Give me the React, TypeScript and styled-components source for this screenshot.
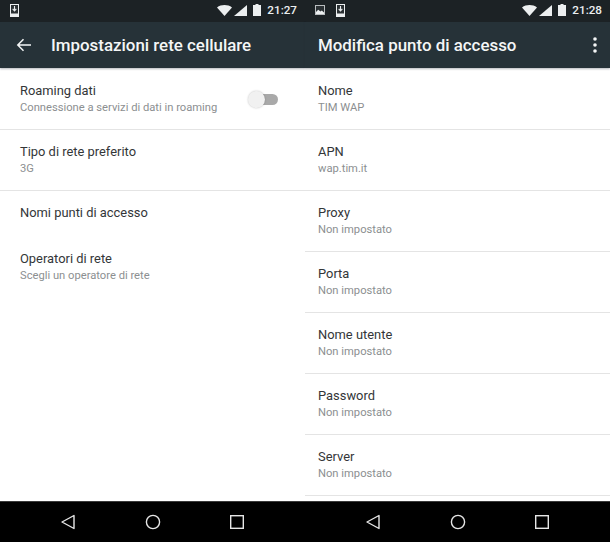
import styled, { createGlobalStyle } from "styled-components";

const GlobalStyle = createGlobalStyle`
  html, body {
    margin: 0;
    padding: 0;
    background: #fff;
  }
  body {
    font-family: "Roboto", "Noto Sans", sans-serif;
  }
`;

const Wrapper = styled.div`
  width: 610px;
  height: 542px;
  display: grid;
  grid-template-columns: 305px 305px;
  overflow: hidden;
`;

const Screen = styled.div`
  height: 542px;
  display: flex;
  flex-direction: column;
  background: #fff;
`;

const StatusBar = styled.div`
  height: 22px;
  flex: none;
  box-sizing: border-box;
  display: flex;
  align-items: center;
  gap: 11px;
  padding: 0 8px 2px 10px;
  background: #1c2225;
  color: #eceff0;
`;

const StatusRight = styled.div`
  margin-left: auto;
  display: flex;
  align-items: center;
  gap: 2px;
`;

const Clock = styled.span`
  font-size: 11.7px;
  font-weight: 500;
  margin-left: 4px;
  line-height: 20px;
`;

const Toolbar = styled.div<{ $inset: number }>`
  height: 46px;
  flex: none;
  display: flex;
  align-items: center;
  padding: 0 12px 0 ${(p) => p.$inset}px;
  background: #263238;
  color: #f4f6f6;
  box-shadow: 0 1px 2px rgba(40, 50, 60, 0.35);
  z-index: 1;
`;

const Title = styled.h1`
  margin: 0;
  font-size: 16.9px;
  font-weight: 500;
  line-height: 24px;
`;

const BackIcon = styled.svg`
  width: 16px;
  height: 14px;
  margin-right: 19px;
`;

const MoreIcon = styled.svg`
  width: 6px;
  height: 18px;
  margin-left: auto;
`;

const List = styled.div`
  flex: 1;
  min-height: 0;
  padding-top: 1px;
  overflow: hidden;
`;

const Row = styled.div<{ $divider?: boolean; $inset: number; $short?: boolean }>`
  height: ${(p) => (p.$short ? 46 : 61)}px;
  box-sizing: border-box;
  display: flex;
  align-items: center;
  padding: 0 ${(p) => p.$inset}px;
  border-bottom: 1px solid ${(p) => (p.$divider ? "#e4e4e4" : "transparent")};
`;

const RowText = styled.div<{ $inset: number }>`
  flex: 1;
  margin-left: ${(p) => 20 - p.$inset}px;
  padding-bottom: 2px;
`;

const RowTitle = styled.div`
  font-size: 12.9px;
  line-height: 17px;
  color: #333638;
`;

const RowSub = styled.div`
  margin-top: 1px;
  font-size: 11.2px;
  line-height: 15px;
  color: #8c8f91;
`;

const Switch = styled.div`
  position: relative;
  width: 25px;
  height: 11px;
  margin-right: 19px;
  border-radius: 5.5px;
  background: #a9a9a9;
`;

const Thumb = styled.span`
  position: absolute;
  left: -5px;
  top: -3px;
  width: 17px;
  height: 17px;
  border-radius: 50%;
  background: #f1f1f1;
  box-shadow: 0 0 2px rgba(0, 0, 0, 0.25);
`;

const NavBar = styled.div`
  height: 41px;
  flex: none;
  box-sizing: border-box;
  display: grid;
  grid-template-columns: repeat(3, 84.5px);
  justify-content: center;
  align-items: center;
  justify-items: center;
  background: #000;
  border-top: 1px solid #3a3a3a;
`;

const NavIcon = styled.svg`
  width: 18px;
  height: 18px;
  fill: none;
  stroke: #e6e6e6;
  stroke-width: 1.4;
`;

const BatteryIcon = styled.svg`
  margin-left: 4px;
`;

function StatusIcons({ time }: { time: string }) {
  return (
    <StatusRight>
      <svg width="15" height="11" viewBox="0 0 15 11">
        <path d="M0 2.400C2.200.8 4.700 0 7.500 0S12.800.8 15 2.400L7.500 11z" fill="#eceff0" />
      </svg>
      <svg width="13" height="11" viewBox="0 0 13 11">
        <path d="M13 0v11H0z" fill="#eceff0" />
      </svg>
      <BatteryIcon width="8" height="12" viewBox="0 0 8 12">
        <path d="M2.500 0h3v1H8v11H0V1h2.500z" fill="#eceff0" />
      </BatteryIcon>
      <Clock>{time}</Clock>
    </StatusRight>
  );
}

function DownloadIcon() {
  return (
    <svg width="9" height="13" viewBox="0 0 9 13">
      <rect width="9" height="13" fill="#eceff0" />
      <rect x="1" y="1" width="7" height="8.500" fill="#2a3033" />
      <path d="M4.500 2v4.500M2.700 4.800l1.800 2.200 1.800-2.200" stroke="#eceff0" strokeWidth="1.100" fill="none" />
    </svg>
  );
}

function ImageIcon() {
  return (
    <svg width="10" height="10" viewBox="0 0 10 10">
      <rect x="0.500" y="0.500" width="9" height="9" fill="#2a3033" stroke="#b9bdbf" />
      <path d="M1 9V7l2.200-2.200L5.500 6.500 6.800 5.500 9 7.500V9z" fill="#eceff0" />
    </svg>
  );
}

function Nav() {
  return (
    <NavBar>
      <NavIcon viewBox="0 0 18 18">
        <path d="M15 2.500v13L3 9z" strokeLinejoin="round" />
      </NavIcon>
      <NavIcon viewBox="0 0 18 18">
        <circle cx="9" cy="9" r="6.600" />
      </NavIcon>
      <NavIcon viewBox="0 0 18 18">
        <rect x="2.700" y="2.700" width="12.600" height="12.600" />
      </NavIcon>
    </NavBar>
  );
}

const apnRows = [
  { title: "Nome", sub: "TIM WAP" },
  { title: "APN", sub: "wap.tim.it" },
  { title: "Proxy", sub: "Non impostato" },
  { title: "Porta", sub: "Non impostato" },
  { title: "Nome utente", sub: "Non impostato" },
  { title: "Password", sub: "Non impostato" },
  { title: "Server", sub: "Non impostato" },
];

function App() {
  return (
    <Wrapper>
      <GlobalStyle />
      <Screen>
        <StatusBar>
          <DownloadIcon />
          <StatusIcons time="21:27" />
        </StatusBar>
        <Toolbar $inset={16}>
          <BackIcon viewBox="0 0 16 14">
            <path d="M15 7H2M7.500 1.200 1.800 7l5.700 5.800" stroke="#f4f6f6" strokeWidth="1.500" fill="none" />
          </BackIcon>
          <Title>Impostazioni rete cellulare</Title>
        </Toolbar>
        <List>
          <Row $inset={8} $divider>
            <RowText $inset={8}>
              <RowTitle>Roaming dati</RowTitle>
              <RowSub>Connessione a servizi di dati in roaming</RowSub>
            </RowText>
            <Switch>
              <Thumb />
            </Switch>
          </Row>
          <Row $inset={8} $divider>
            <RowText $inset={8}>
              <RowTitle>Tipo di rete preferito</RowTitle>
              <RowSub>3G</RowSub>
            </RowText>
          </Row>
          <Row $inset={8} $short>
            <RowText $inset={8}>
              <RowTitle>Nomi punti di accesso</RowTitle>
            </RowText>
          </Row>
          <Row $inset={8}>
            <RowText $inset={8}>
              <RowTitle>Operatori di rete</RowTitle>
              <RowSub>Scegli un operatore di rete</RowSub>
            </RowText>
          </Row>
        </List>
        <Nav />
      </Screen>
      <Screen>
        <StatusBar>
          <ImageIcon />
          <DownloadIcon />
          <StatusIcons time="21:28" />
        </StatusBar>
        <Toolbar $inset={13}>
          <Title>Modifica punto di accesso</Title>
          <MoreIcon viewBox="0 0 6 18">
            <circle cx="3" cy="3" r="1.800" fill="#f4f6f6" />
            <circle cx="3" cy="9" r="1.800" fill="#f4f6f6" />
            <circle cx="3" cy="15" r="1.800" fill="#f4f6f6" />
          </MoreIcon>
        </Toolbar>
        <List>
          {apnRows.map((row) => (
            <Row key={row.title} $inset={0} $divider>
              <RowText $inset={7}>
                <RowTitle>{row.title}</RowTitle>
                <RowSub>{row.sub}</RowSub>
              </RowText>
            </Row>
          ))}
        </List>
        <Nav />
      </Screen>
    </Wrapper>
  );
}

export default App;
